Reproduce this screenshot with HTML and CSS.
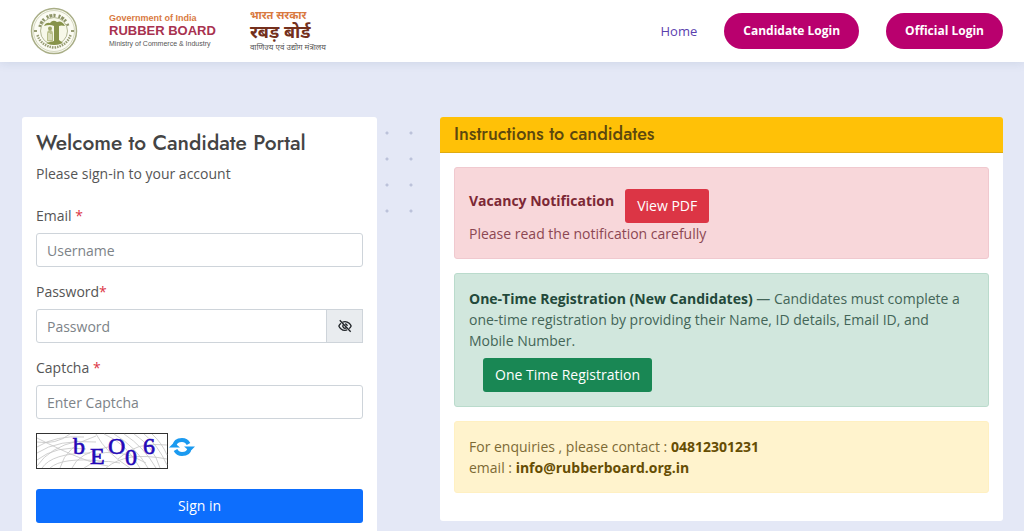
FILE: index.html
```
<!DOCTYPE html>
<html lang="en">
<head>
<meta charset="utf-8">
<meta name="viewport" content="width=device-width, initial-scale=1">
<title>Rubber Board - Candidate Portal</title>
<link rel="stylesheet" href="styles.css">
</head>

<body>
<header class="header">
	<a href="#" class="logo">
		<svg class="emblem" viewBox="0 0 48 48" role="img" aria-label="Rubber Board">
			<circle cx="24" cy="24" r="22.5" fill="#fbfbf3" stroke="#a9ae87" stroke-width="1.5"/>
			<circle cx="24" cy="24" r="20.500" fill="none" stroke="#d5d8c0" stroke-width="1"/>
			<path d="M10 20Q13 9 24 8.500 35 9 38 20" fill="none" stroke="#8f9569" stroke-width="3.500" stroke-dasharray="2 1 3 1 2 3"/>
			<path d="M7.500 28Q11 39 24 40.500 37 39 40.500 28" fill="none" stroke="#979c74" stroke-width="2.500" stroke-dasharray="1.500 1"/>
			<circle cx="24" cy="24" r="13.500" fill="#f7f8e9" stroke="#b3b894" stroke-width="1"/>
			<path d="M14 19q2-4 6-3 3-4 7-1 5-2 8 4-4-1-6 0v14l4 3q-9 4-17 0l8-2V19q-4-2-10 0z" fill="#87934a"/>
			<path d="M17 34v-7q0-4 3-4t3 4v8z" fill="#b9bf8a"/>
			<circle cx="20" cy="21.500" r="2" fill="#9da565"/>
			<path d="M19 26v7M21 27v6" stroke="#f7f8e9" stroke-width="1"/>
			<path d="M4 24h3M41 24h3" stroke="#979c74" stroke-width="2"/>
		</svg>
		<span class="logo-text">
			<span class="logo-govt">Government of India</span>
			<span class="logo-name">RUBBER BOARD</span>
			<span class="logo-ministry">Ministry of Commerce &amp; Industry</span>
		</span>
		<span class="logo-text logo-hindi" lang="hi">
			<span class="logo-govt">भारत सरकार</span>
			<span class="logo-name">रबड़ बोर्ड</span>
			<span class="logo-ministry">वाणिज्य एवं उद्योग मंत्रालय</span>
		</span>
	</a>
	<nav class="nav">
		<a href="#">Home</a>
		<a href="#" class="nav-btn">Candidate Login</a>
		<a href="#" class="nav-btn">Official Login</a>
	</nav>
</header>

<main class="portal">
	<section class="card login">
		<h1>Welcome to Candidate Portal</h1>
		<p class="intro">Please sign-in to your account</p>
		<form>
			<div class="field">
				<label for="email">Email <span class="required">*</span></label>
				<input type="text" id="email" placeholder="Username">
			</div>
			<div class="field">
				<label for="password">Password<span class="required">*</span></label>
				<div class="input-group">
					<input type="password" id="password" placeholder="Password">
					<button type="button" class="toggle" aria-label="Show password">
						<svg viewBox="0 0 16 16" width="14" height="14" fill="none" stroke="#212529" stroke-width="1.500">
							<path d="M5 3.700Q6.500 3 8 3c4 0 6.500 3.500 7 5q-.6 1.500-2.300 3M10.500 12.500Q9.300 13 8 13c-4 0-6.500-3.500-7-5q.6-1.600 2.400-3.200"/>
							<path d="M6 6.500a2.500 2.500 0 0 0 3.500 3.500M8 5.500a2.500 2.500 0 0 1 2.500 2.500M2 1.500l12.500 13"/>
						</svg>
					</button>
				</div>
			</div>
			<div class="field">
				<label for="captcha">Captcha <span class="required">*</span></label>
				<input type="text" id="captcha" placeholder="Enter Captcha">
			</div>
			<div class="captcha">
				<svg class="captcha-code" viewBox="0 0 132 36" width="132" height="36">
					<rect x=".5" y=".5" width="131" height="35" fill="#fff" stroke="#333"/>
					<g fill="none" stroke="#c4c4c4" stroke-width=".8">
						<path d="M1 14Q20 2 48 4M1 20Q22 6 60 9M1 27Q20 12 50 16M1 33Q14 14 42 8M6 35Q16 20 54 20M14 35Q26 24 66 28M24 35Q30 12 60 3M1 9Q20 12 34 1M36 35Q42 20 72 14M48 35Q60 25 84 30"/>
						<path d="M60 1Q70 20 94 35M68 1Q90 10 104 35M78 1Q100 14 112 35M88 1Q108 14 120 35M98 1Q118 14 124 35M108 1Q122 12 131 32M116 1Q126 10 131 22M56 22Q84 14 110 30M70 35Q90 18 131 26M1 5Q50 30 72 33M82 26Q100 8 131 12"/>
					</g>
					<g class="captcha-chars">
						<text x="37" y="21">b</text>
						<text x="54" y="31">E</text>
						<text x="72" y="21">O</text>
						<text x="89" y="32">0</text>
						<text x="107" y="21">6</text>
					</g>
				</svg>
				<button type="button" class="refresh" aria-label="Refresh captcha">
					<svg viewBox="0 0 26 20" width="26" height="20">
						<path d="M5.500 9Q6 3 13 3q4.500 0 6.500 4M20.500 11q-.5 6-7.500 6-4.500 0-6.500-4" fill="none" stroke="#1b9af0" stroke-width="4"/>
						<path d="M0 10.500 5 5.500l6 5zM15 9.500h11l-5 5z" fill="#1b9af0"/>
					</svg>
				</button>
			</div>
			<button type="submit" class="btn btn-primary">Sign in</button>
		</form>
	</section>

	<div class="dots"></div>

	<section class="card">
		<h2>Instructions to candidates</h2>
		<div class="instructions">
			<div class="alert alert-danger">
				<div class="vacancy">
					<strong>Vacancy Notification</strong>
					<a href="#" class="btn btn-danger">View PDF</a>
				</div>
				Please read the notification carefully
			</div>
			<div class="alert alert-success">
				<strong>One-Time Registration (New Candidates)</strong> — Candidates must complete a one-time registration by providing their Name, ID details, Email ID, and Mobile Number.
				<div class="action">
					<a href="#" class="btn btn-success">One Time Registration</a>
				</div>
			</div>
			<div class="alert alert-warning">
				For enquiries , please contact : <strong>04812301231</strong><br>
				email : <strong>info@rubberboard.org.in</strong>
			</div>
		</div>
	</section>
</main>
</body>
</html>
```
FILE: styles.css
```
* {
	box-sizing:border-box;
}

body {
	margin:0;
	background:#e4e8f6;
	color:#555;
	font:14px/21px "Open Sans", sans-serif;
}

a {
	text-decoration:none;
}

h1, h2 {
	margin:0;
	font-family:Jost, Lato, sans-serif;
	font-weight:500;
}

h1 {
	margin-bottom:7px;
	color:#444;
	font-size:21px;
	line-height:25px;
}

h2 {
	padding:7px 14px;
	background:#ffc107;
	border-bottom:1px solid #dfab10;
	border-radius:3px 3px 0 0;
	color:#5c480e;
	font-size:18px;
	line-height:21px;
}

input, button {
	font:inherit;
}

/* Header */
.header {
	display:flex;
	justify-content:space-between;
	align-items:center;
	height:62px;
	padding:0 21px 0 30px;
	background:#fff;
	box-shadow:0 0 10px rgba(50,80,120,.15);
}

.logo {
	display:flex;
	align-items:center;
}

.emblem {
	width:48px;
	height:48px;
	margin-right:31px;
}

.logo-text {
	display:flex;
	flex-direction:column;
	margin-right:34px;
	font-family:"Liberation Sans", Arial, sans-serif;
	white-space:nowrap;
}

.logo-govt {
	color:#d9793f;
	font-size:9px;
	font-weight:bold;
	line-height:11px;
}

.logo-name {
	color:#a83250;
	font-size:13px;
	font-weight:bold;
	line-height:14px;
}

.logo-ministry {
	color:#555;
	font-size:7px;
	line-height:11px;
}

.logo-hindi {
	font-family:"Noto Sans", "Noto Sans Devanagari", sans-serif;
}

.logo-hindi .logo-govt {
	font-size:11px;
	line-height:12px;
}

.logo-hindi .logo-name {
	color:#74301c;
	font-size:18px;
	line-height:20px;
}

.logo-hindi .logo-ministry {
	font-size:8px;
	line-height:12px;
}

.nav {
	display:flex;
	align-items:center;
	gap:27px;
	font-size:13px;
}

.nav a {
	color:#5b3fae;
}

.nav .nav-btn {
	padding:8px 19px;
	border-radius:18px;
	background:#b9006e;
	color:#fff;
	font-size:12px;
	font-weight:700;
	line-height:20px;
}

/* Cards */
.portal {
	display:grid;
	grid-template-columns:355fr 63px 563fr;
	align-items:start;
	padding:55px 21px 55px 22px;
}

.card {
	background:#fff;
	border-radius:3px;
}

.login {
	padding:14px;
}

.intro {
	margin:0 0 21px;
}

.dots {
	width:48px;
	height:104px;
	margin-top:3px;
	margin-left:-2px;
	background:radial-gradient(circle, #bcc2da 1px, transparent 2px) 0 0 / 24px 26px;
}

/* Form */
.field {
	margin-bottom:14px;
}

label {
	display:block;
	margin-bottom:7px;
}

.required {
	color:#dc3545;
}

input {
	display:block;
	width:100%;
	height:34px;
	padding:5px 10px;
	border:1px solid #ced4da;
	border-radius:3px;
	background:#fff;
	color:#212529;
}

input::placeholder {
	color:#7d8388;
	opacity:1;
}

.input-group {
	display:flex;
}

.input-group input {
	flex:1;
	min-width:0;
	border-radius:3px 0 0 3px;
}

.toggle {
	display:flex;
	justify-content:center;
	align-items:center;
	width:37px;
	margin-left:-1px;
	padding:0;
	border:1px solid #ced4da;
	background:#e9ecef;
}

.captcha {
	display:flex;
	align-items:flex-start;
	margin-bottom:20px;
}

.captcha-code {
	display:block;
}

.captcha-chars {
	fill:#2408b8;
	stroke:#2408b8;
	stroke-width:.6px;
	font:24px "Liberation Serif", serif;
}

.refresh {
	display:flex;
	margin:4px 1px;
	padding:0;
	border:0;
	background:none;
}

.btn {
	display:inline-block;
	padding:6px 12px;
	border:0;
	border-radius:3px;
	color:#fff;
	line-height:22px;
	text-align:center;
	vertical-align:top;
}

.btn-primary {
	display:block;
	width:100%;
	background:#0d6efd;
}

.btn-danger {
	background:#dc3545;
}

.btn-success {
	background:#198754;
}

/* Instructions */
.instructions {
	padding:14px;
}

.alert {
	margin-bottom:14px;
	padding:14px;
	border:1px solid;
	border-radius:3px;
}

.alert-danger {
	background:#f8d7da;
	border-color:#f0c9cf;
	color:#8c4752;
}

.alert-danger strong {
	color:#7c2835;
}

.alert-success {
	background:#d1e7dd;
	border-color:#badbcc;
	color:#436557;
}

.alert-success strong {
	color:#23493a;
}

.alert-warning {
	background:#fff3cd;
	border-color:#fff0c2;
	color:#7d6a35;
}

.alert-warning strong {
	color:#664d03;
}

.vacancy {
	display:flex;
	align-items:center;
	gap:11px;
}

.vacancy strong {
	margin-bottom:4px;
}

.vacancy .btn {
	margin-top:7px;
}

.action {
	padding:7px 14px 0;
}
```
